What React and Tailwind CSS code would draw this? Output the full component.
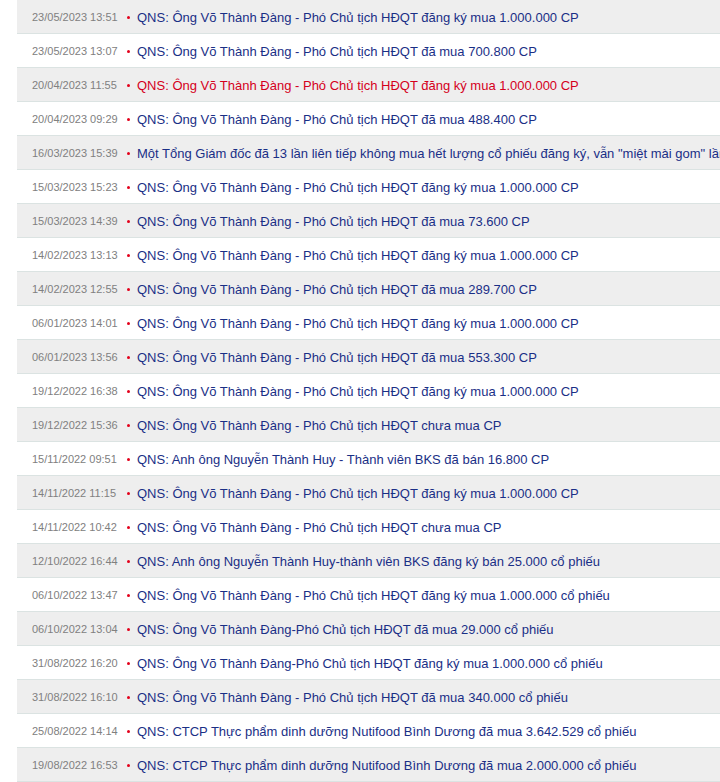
import React from "react"

const items = [
  ["23/05/2023 13:51", "QNS: Ông Võ Thành Đàng - Phó Chủ tịch HĐQT đăng ký mua 1.000.000 CP"],
  ["23/05/2023 13:07", "QNS: Ông Võ Thành Đàng - Phó Chủ tịch HĐQT đã mua 700.800 CP"],
  ["20/04/2023 11:55", "QNS: Ông Võ Thành Đàng - Phó Chủ tịch HĐQT đăng ký mua 1.000.000 CP", true],
  ["20/04/2023 09:29", "QNS: Ông Võ Thành Đàng - Phó Chủ tịch HĐQT đã mua 488.400 CP"],
  ["16/03/2023 15:39", "Một Tổng Giám đốc đã 13 lần liên tiếp không mua hết lượng cổ phiếu đăng ký, vẫn \"miệt mài gom\" lần thứ 14"],
  ["15/03/2023 15:23", "QNS: Ông Võ Thành Đàng - Phó Chủ tịch HĐQT đăng ký mua 1.000.000 CP"],
  ["15/03/2023 14:39", "QNS: Ông Võ Thành Đàng - Phó Chủ tịch HĐQT đã mua 73.600 CP"],
  ["14/02/2023 13:13", "QNS: Ông Võ Thành Đàng - Phó Chủ tịch HĐQT đăng ký mua 1.000.000 CP"],
  ["14/02/2023 12:55", "QNS: Ông Võ Thành Đàng - Phó Chủ tịch HĐQT đã mua 289.700 CP"],
  ["06/01/2023 14:01", "QNS: Ông Võ Thành Đàng - Phó Chủ tịch HĐQT đăng ký mua 1.000.000 CP"],
  ["06/01/2023 13:56", "QNS: Ông Võ Thành Đàng - Phó Chủ tịch HĐQT đã mua 553.300 CP"],
  ["19/12/2022 16:38", "QNS: Ông Võ Thành Đàng - Phó Chủ tịch HĐQT đăng ký mua 1.000.000 CP"],
  ["19/12/2022 15:36", "QNS: Ông Võ Thành Đàng - Phó Chủ tịch HĐQT chưa mua CP"],
  ["15/11/2022 09:51", "QNS: Anh ông Nguyễn Thành Huy - Thành viên BKS đã bán 16.800 CP"],
  ["14/11/2022 11:15", "QNS: Ông Võ Thành Đàng - Phó Chủ tịch HĐQT đăng ký mua 1.000.000 CP"],
  ["14/11/2022 10:42", "QNS: Ông Võ Thành Đàng - Phó Chủ tịch HĐQT chưa mua CP"],
  ["12/10/2022 16:44", "QNS: Anh ông Nguyễn Thành Huy-thành viên BKS đăng ký bán 25.000 cổ phiếu"],
  ["06/10/2022 13:47", "QNS: Ông Võ Thành Đàng - Phó Chủ tịch HĐQT đăng ký mua 1.000.000 cổ phiếu"],
  ["06/10/2022 13:04", "QNS: Ông Võ Thành Đàng-Phó Chủ tịch HĐQT đã mua 29.000 cổ phiếu"],
  ["31/08/2022 16:20", "QNS: Ông Võ Thành Đàng-Phó Chủ tịch HĐQT đăng ký mua 1.000.000 cổ phiếu"],
  ["31/08/2022 16:10", "QNS: Ông Võ Thành Đàng - Phó Chủ tịch HĐQT đã mua 340.000 cổ phiếu"],
  ["25/08/2022 14:14", "QNS: CTCP Thực phẩm dinh dưỡng Nutifood Bình Dương đã mua 3.642.529 cổ phiếu"],
  ["19/08/2022 16:53", "QNS: CTCP Thực phẩm dinh dưỡng Nutifood Bình Dương đã mua 2.000.000 cổ phiếu"],
]

export default function App() {
  return (
    <div className="w-[720px] h-[782px] overflow-hidden bg-white font-['Liberation_Sans',Arial,sans-serif]">
      <ul className="ml-[17px]">
        {items.map(([date, title, hot], i) => (
          <li
            key={i}
            className={`h-[34px] pt-[2px] flex items-center whitespace-nowrap border-b border-[#dbe3e2] ${i % 2 === 0 ? "bg-[#eeeeee]" : "bg-white"}`}
          >
            <span className="pl-[15px] w-[110px] shrink-0 text-[11px] text-[#808080]">{date}</span>
            <span className="w-[3px] h-[3px] rounded-full bg-[#e3001b] shrink-0"></span>
            <a className={`ml-[7px] text-[13px] ${hot ? "text-[#d5001c]" : "text-[#1a2f86]"}`}>{title}</a>
          </li>
        ))}
      </ul>
    </div>
  )
}
